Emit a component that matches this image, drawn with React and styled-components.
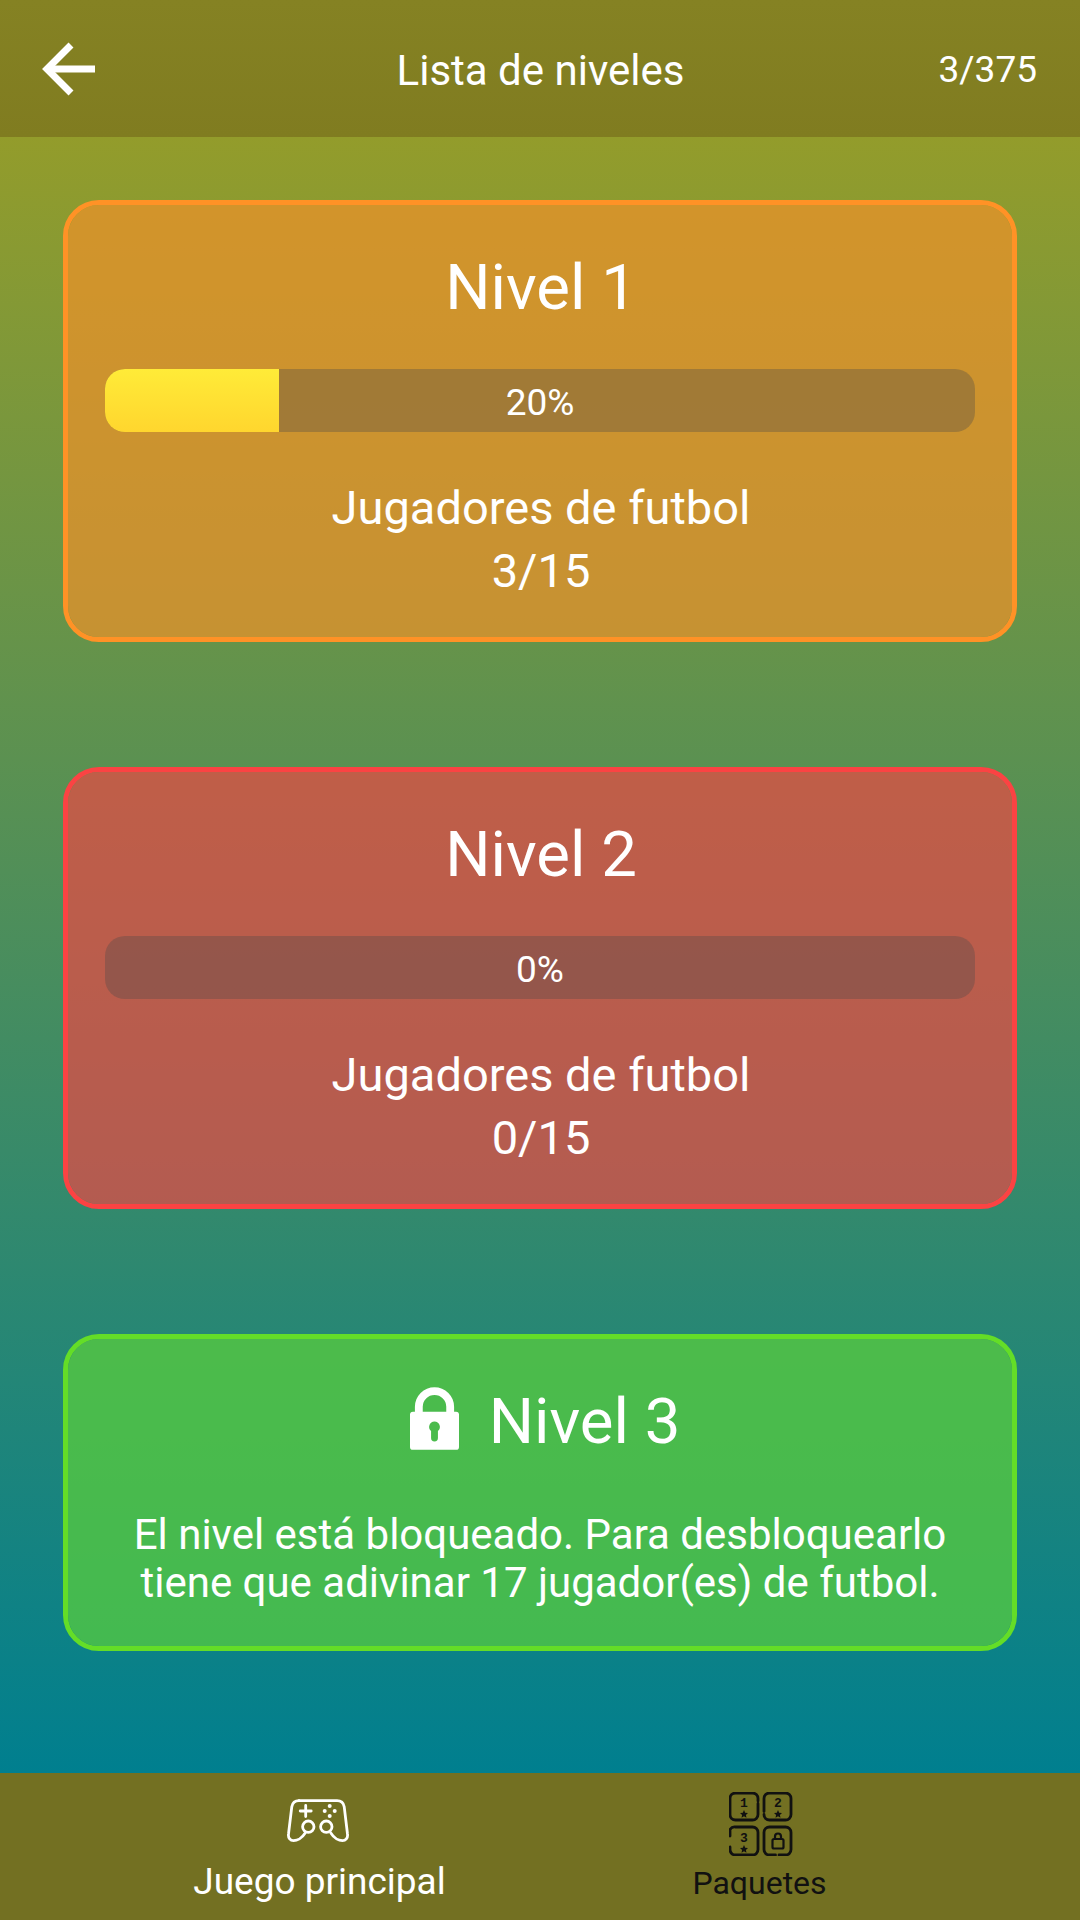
import React from 'react'
import styled, {createGlobalStyle} from 'styled-components'

const GlobalStyle = createGlobalStyle`
  html, body {
    margin: 0;
    padding: 0;
    background: #007f8f;
  }
  * {
    box-sizing: border-box;
  }
`;

//Icons
const BackArrow = () => (
    <svg width="56" height="56" viewBox="0 0 56 56" fill="none" stroke="#fff" strokeWidth="7">
        <path d="M54 28H6"/>
        <path d="M30 4 6 28l24 24"/>
    </svg>
);

const LockIcon = () => (
    <svg width="49" height="63" viewBox="0 0 50 64" fill="#fff">
        <path d="M5 26V20a20 20 0 0 1 40 0v6h-8V20a12 12 0 0 0-24 0v6z"/>
        <path fillRule="evenodd" d="M3 25h44a3 3 0 0 1 3 3v33a3 3 0 0 1-3 3H3a3 3 0 0 1-3-3V28a3 3 0 0 1 3-3zm22 10a5.500 5.500 0 0 0-3.500 9.700V52a3.500 3.500 0 0 0 7 0v-7.300A5.500 5.500 0 0 0 25 35z"/>
    </svg>
);

const GamepadIcon = () => (
    <svg width="62" height="44" viewBox="0 0 62 44" fill="none" stroke="#fff" strokeWidth="2.800" strokeLinecap="round">
        <path d="M12 1.700h38c4 0 6.500 2.300 7.200 6L60.500 35c.6 4-2 6.700-5 6.700-3.500 0-8.500-2.500-11.500-7.400"/>
        <path d="M12 1.700C8 1.700 5.500 4 4.800 7.700L1.500 35c-.6 4 2 6.700 5 6.700 3.500 0 8.500-2.500 11.500-7.400"/>
        <circle cx="21.300" cy="27.700" r="5.700"/>
        <circle cx="39.300" cy="27.700" r="5.700"/>
        <path d="M18.700 6.500v11M13.200 12h11"/>
        <g fill="#fff" stroke="none">
            <circle cx="42.700" cy="7" r="2"/>
            <circle cx="42.700" cy="17" r="2"/>
            <circle cx="37.700" cy="12" r="2"/>
            <circle cx="47.700" cy="12" r="2"/>
        </g>
    </svg>
);

const Star = ({x, y}) => (
    <path
        transform={`translate(${x} ${y})`}
        fill="#111"
        stroke="none"
        d="M0-4 1.200-1.300 4-1 1.900.9 2.500 3.800 0 2.300-2.500 3.800-1.900.9-4-1-1.200-1.300z"
    />
);

const PackagesIcon = () => (
    <svg width="64" height="64" viewBox="0 0 64 64" fill="none" stroke="#111" strokeWidth="2.800" strokeLinecap="round">
        <path d="M29 9V6.500A5.500 5.500 0 0 0 23.500 1H6.500A5.500 5.500 0 0 0 1 6.500v16A5.500 5.500 0 0 0 6.500 28h17a5.500 5.500 0 0 0 5.500-5.500V11.500"/>
        <path d="M35 22.500A5.500 5.500 0 0 0 40.500 28h16a5.500 5.500 0 0 0 5.500-5.500v-16A5.500 5.500 0 0 0 56.500 1h-16A5.500 5.500 0 0 0 35 6.500v13"/>
        <path d="M1 44v-6.500A5.500 5.500 0 0 1 6.500 35h17a5.500 5.500 0 0 1 5.500 5.500v17a5.500 5.500 0 0 1-5.500 5.500h-17A5.500 5.500 0 0 1 1 57.500V55"/>
        <path d="M50 63h6.500a5.500 5.500 0 0 0 5.500-5.500v-17A5.500 5.500 0 0 0 56.500 35h-16a5.500 5.500 0 0 0-5.500 5.500v17a5.500 5.500 0 0 0 5.500 5.500h6"/>
        <IconDigit x="15" y="15">1</IconDigit>
        <IconDigit x="49" y="15">2</IconDigit>
        <IconDigit x="15" y="50">3</IconDigit>
        <Star x={15} y={22}/>
        <Star x={49} y={22}/>
        <Star x={15} y={57}/>
        <rect x="43.500" y="47" width="11" height="9.500" rx="1.500" strokeWidth="2.200"/>
        <path d="M46 47v-2.500a3 3 0 0 1 6 0V47" strokeWidth="2.200"/>
    </svg>
);

const IconDigit = styled.text`
  font-family: "Liberation Mono", monospace;
  font-size: 13px;
  font-weight: 700;
  fill: #111;
  stroke: none;
  text-anchor: middle;
`;

//Level card with progress
const LevelCard = ({tone, title, percent, category, count}) => (
    <Card $tone={tone}>
        <LevelTitle>{title}</LevelTitle>
        <ProgressTrack>
            {percent > 0 && <ProgressFill style={{width: `${percent}%`}}/>}
            <ProgressLabel>{percent}%</ProgressLabel>
        </ProgressTrack>
        <CardInfo>{category}</CardInfo>
        <CardInfo>{count}</CardInfo>
    </Card>
);

const App = () => {
    return (
        <>
            <GlobalStyle/>
            <Page>
                <Header>
                    <BackButton><BackArrow/></BackButton>
                    <HeaderTitle>Lista de niveles</HeaderTitle>
                    <HeaderCount>3/375</HeaderCount>
                </Header>
                <Levels>
                    <LevelCard tone="orange" title="Nivel 1" percent={20} category="Jugadores de futbol" count="3/15"/>
                    <LevelCard tone="red" title="Nivel 2" percent={0} category="Jugadores de futbol" count="0/15"/>
                    <LockedCard $tone="green">
                        <LockedTitle>
                            <LockWrap><LockIcon/></LockWrap>
                            <CardTitle>Nivel 3</CardTitle>
                        </LockedTitle>
                        <LockedText>
                            El nivel está bloqueado. Para desbloquearlo<br/>
                            tiene que adivinar 17 jugador(es) de futbol.
                        </LockedText>
                    </LockedCard>
                </Levels>
                <Footer>
                    <Tab>
                        <TabIcon $active><GamepadIcon/></TabIcon>
                        <TabLabel $active>Juego principal</TabLabel>
                    </Tab>
                    <Tab>
                        <TabIcon><PackagesIcon/></TabIcon>
                        <TabLabel>Paquetes</TabLabel>
                    </Tab>
                </Footer>
            </Page>
        </>
    );
};

//Styles
const tones = {
    orange: {border: '#ff9226', fill: 'rgba(240, 145, 42, 0.7)'},
    red: {border: '#fb4343', fill: 'rgba(238, 71, 68, 0.69)'},
    green: {border: '#64dd27', fill: 'rgba(92, 210, 57, 0.7)'},
};

const Page = styled.div`
  width: 1080px;
  height: 1920px;
  display: flex;
  flex-direction: column;
  font-family: Roboto, "Liberation Sans", sans-serif;
  color: #fff;
  overflow: hidden;
`;
const Header = styled.header`
  height: 137px;
  flex: none;
  display: grid;
  grid-template-columns: 1fr auto 1fr;
  align-items: center;
  padding: 0 43px;
  background: linear-gradient(#858223, #807c20);
`;
const BackButton = styled.div`
  display: flex;
  align-items: center;
  margin-left: -2px;
`;
const HeaderTitle = styled.h1`
  margin: 3px 0 0;
  padding-left: 1px;
  font-size: 42px;
  font-weight: 400;
`;
const HeaderCount = styled.div`
  justify-self: end;
  margin-top: 2px;
  font-size: 37px;
`;
const Levels = styled.main`
  flex: 1;
  display: flex;
  flex-direction: column;
  gap: 125px;
  padding: 63px 63px 0;
  background: linear-gradient(#939c2b, #007f8f);
`;
const Card = styled.section`
  height: 442px;
  display: flex;
  flex-direction: column;
  align-items: center;
  padding: 45px 37px 0;
  border: 5px solid ${({$tone}) => tones[$tone].border};
  border-radius: 36px;
  background: ${({$tone}) => tones[$tone].fill};
  background-clip: padding-box;
`;
const CardTitle = styled.h2`
  margin: 0;
  font-size: 63.500px;
  line-height: 76px;
  font-weight: 400;
`;
const LevelTitle = styled(CardTitle)`
  padding-left: 2px;
`;
const ProgressTrack = styled.div`
  position: relative;
  width: 100%;
  height: 63px;
  margin: 43px 0 44px;
  border-radius: 20px;
  background: rgba(73, 73, 73, 0.33);
  overflow: hidden;
  display: flex;
  align-items: center;
  justify-content: center;
`;
const ProgressFill = styled.div`
  position: absolute;
  left: 0;
  top: 0;
  bottom: 0;
  background: linear-gradient(#ffeb38, #ffd62e);
`;
const ProgressLabel = styled.span`
  position: relative;
  top: 2px;
  font-size: 37px;
`;
const CardInfo = styled.p`
  margin: 0;
  padding-left: 2px;
  font-size: 47px;
  line-height: 63px;
`;
const LockedCard = styled(Card)`
  height: 317px;
`;
const LockedTitle = styled.div`
  display: flex;
  align-items: center;
  gap: 30px;
  padding-left: 10px;
`;
const LockWrap = styled.div`
  display: flex;
  margin-bottom: 8px;
`;
const LockedText = styled.p`
  margin: 51px 0 0;
  font-size: 42px;
  line-height: 48px;
  white-space: nowrap;
  text-align: center;
`;
const Footer = styled.footer`
  height: 147px;
  flex: none;
  display: flex;
  justify-content: center;
  background: #737022;
`;
const Tab = styled.div`
  width: 441px;
  display: flex;
  flex-direction: column;
  align-items: center;
`;
const TabIcon = styled.div`
  height: ${({$active}) => ($active ? '70px' : '91px')};
  display: flex;
  align-items: flex-end;
  padding-bottom: ${({$active}) => ($active ? '0' : '8px')};
  padding-right: ${({$active}) => ($active ? '3px' : '0')};
`;
const TabLabel = styled.span`
  margin-top: ${({$active}) => ($active ? '17px' : '0')};
  padding-right: ${({$active}) => ($active ? '0' : '2px')};
  font-size: ${({$active}) => ($active ? '37px' : '32px')};
  color: ${({$active}) => ($active ? '#fff' : '#111')};
`;

export default App;
